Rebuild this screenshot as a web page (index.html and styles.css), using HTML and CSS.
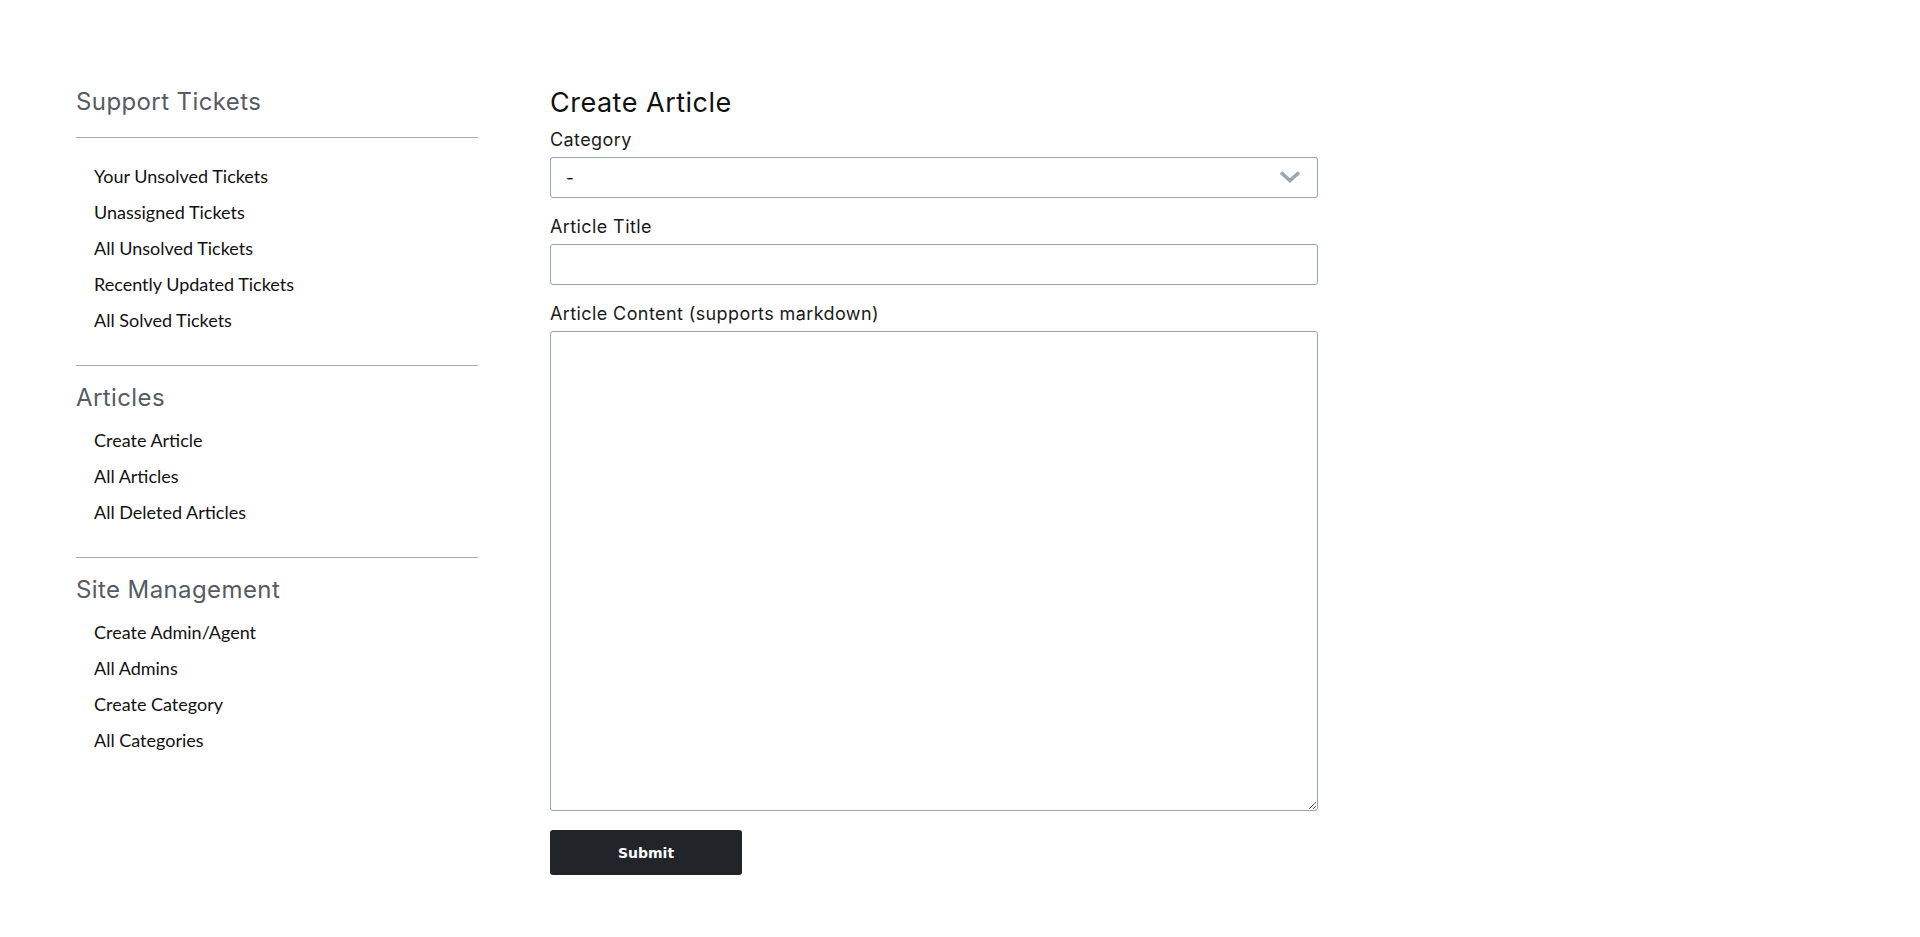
FILE: index.html
```html
<!DOCTYPE html>
<html lang="en">
<head>
    <meta charset="UTF-8">
    <meta name="viewport" content="width=device-width, initial-scale=1.0">
    <title>Create Article</title>
    <link rel="stylesheet" href="styles.css">
</head>
<body>
    <div class="page">
        <aside class="sidebar">
            <section class="side-section">
                <h2 class="side-title">Support Tickets</h2>
                <hr class="side-rule first-rule">
                <ul class="side-links">
                    <li><a href="#">Your Unsolved Tickets</a></li>
                    <li><a href="#">Unassigned Tickets</a></li>
                    <li><a href="#">All Unsolved Tickets</a></li>
                    <li><a href="#">Recently Updated Tickets</a></li>
                    <li><a href="#">All Solved Tickets</a></li>
                </ul>
            </section>
            <hr class="side-rule">
            <section class="side-section">
                <h2 class="side-title">Articles</h2>
                <ul class="side-links">
                    <li><a href="#">Create Article</a></li>
                    <li><a href="#">All Articles</a></li>
                    <li><a href="#">All Deleted Articles</a></li>
                </ul>
            </section>
            <hr class="side-rule">
            <section class="side-section">
                <h2 class="side-title">Site Management</h2>
                <ul class="side-links">
                    <li><a href="#">Create Admin/Agent</a></li>
                    <li><a href="#">All Admins</a></li>
                    <li><a href="#">Create Category</a></li>
                    <li><a href="#">All Categories</a></li>
                </ul>
            </section>
        </aside>

        <main class="content">
            <h1 class="page-title">Create Article</h1>
            <form id="article-form">
                <div class="form-group">
                    <label for="category">Category</label>
                    <div class="select-wrap">
                        <select id="category" name="category">
                            <option value="">-</option>
                        </select>
                        <svg class="chevron" width="22" height="12" viewBox="0 0 22 12">
                            <polyline points="2,1.5 11,9.5 20,1.5" fill="none" stroke="#9aa7b2" stroke-width="3.6"/>
                        </svg>
                    </div>
                </div>
                <div class="form-group">
                    <label for="title">Article Title</label>
                    <input type="text" id="title" name="title">
                </div>
                <div class="form-group">
                    <label for="body">Article Content (supports markdown)</label>
                    <textarea id="body" name="body"></textarea>
                </div>
                <button type="submit">Submit</button>
            </form>
        </main>
    </div>
</body>
</html>
```

FILE: styles.css
```css
html::-webkit-scrollbar {
    width: 17px;
    background-color: #f0f0f0;
}
html::-webkit-scrollbar-thumb {
    background-color: #c1c1c1;
    border: 2px solid #f0f0f0;
}
body {
    margin: 0;
    padding: 0;
    background-color: #fff;
    color: #111;
    font-family: Inter, "Open Sans", sans-serif;
}
.page {
    display: flex;
    align-items: flex-start;
    padding-top: 87px;
    min-height: 2140px;
    box-sizing: border-box;
}

/* sidebar */
.sidebar {
    width: 402px;
    margin-left: 76px;
}
.side-title {
    margin: 0;
    font-size: 24px;
    line-height: 30px;
    font-weight: 400;
    letter-spacing: 0.4px;
    color: #565b62;
}
.side-rule {
    margin: 27px 0 17px;
    border: none;
    border-top: 1px solid #aaa;
}
.side-rule.first-rule {
    margin: 20px 0 20px;
}
.side-links {
    list-style: none;
    margin: 9px 0 0;
    padding: 0 0 0 18px;
}
.first-rule + .side-links {
    margin-top: 0;
}
.side-links li {
    line-height: 36px;
    font-family: Lato, "Noto Sans", sans-serif;
    font-size: 18px;
}
.side-links a {
    color: #111;
    text-decoration: none;
}

/* main form */
.content {
    width: 768px;
    margin-left: 72px;
}
.page-title {
    margin: 0 0 9px;
    font-size: 27px;
    line-height: 32px;
    font-weight: 400;
    letter-spacing: 0.5px;
    color: #111;
}
.form-group {
    margin-bottom: 17px;
}
label {
    display: block;
    font-size: 18px;
    line-height: 24px;
    letter-spacing: 0.4px;
    margin-bottom: 5px;
    color: #1a1a1a;
}
.select-wrap {
    position: relative;
}
select, input, textarea {
    display: block;
    width: 100%;
    box-sizing: border-box;
    border: 1px solid #97a3ae;
    border-radius: 3px;
    background-color: #fff;
    font-family: Inter, "Open Sans", sans-serif;
    font-size: 17px;
    color: #111;
    margin: 0;
}
select {
    height: 41px;
    padding: 0 40px 0 15px;
    appearance: none;
    -webkit-appearance: none;
}
.chevron {
    position: absolute;
    right: 17px;
    top: 14px;
    pointer-events: none;
}
input {
    height: 41px;
    padding: 0 15px;
}
textarea {
    height: 480px;
    padding: 10px 15px;
    resize: vertical;
}
.form-group:last-of-type {
    margin-bottom: 19px;
}
button[type="submit"] {
    display: block;
    width: 192px;
    height: 45px;
    border: none;
    border-radius: 3px;
    background-color: #212529;
    color: #fff;
    font-family: "DejaVu Sans", Verdana, sans-serif;
    font-weight: bold;
    font-size: 14px;
    cursor: pointer;
}
```
